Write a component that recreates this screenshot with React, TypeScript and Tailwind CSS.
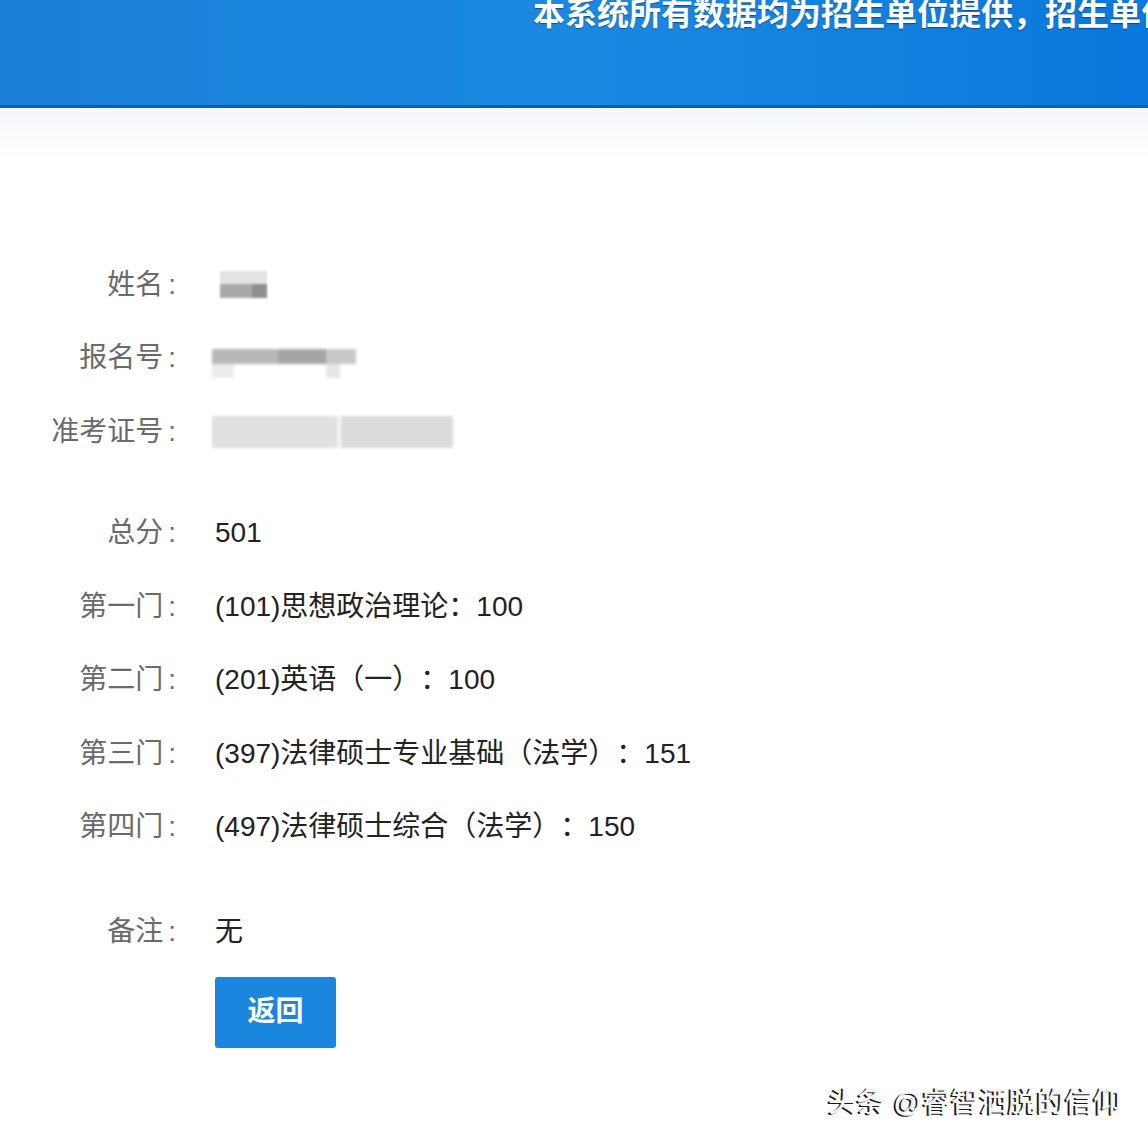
const cjk = 'font-["Liberation_Sans","Noto_Sans_CJK_SC",sans-serif]';

const identity = [
  { label: '姓名', blur: 'name' },
  { label: '报名号', blur: 'reg' },
  { label: '准考证号', blur: 'ticket' },
];

const scores = [
  { label: '总分', value: '501' },
  { label: '第一门', value: '(101)思想政治理论：100' },
  { label: '第二门', value: '(201)英语（一）：100' },
  { label: '第三门', value: '(397)法律硕士专业基础（法学）：151' },
  { label: '第四门', value: '(497)法律硕士综合（法学）：150' },
];

function Redacted({ kind }: { kind: string }) {
  if (kind === 'name') {
    return (
      <div className="ml-[5px] flex w-[47px] flex-col blur-[1px]">
        <div className="h-[13px] bg-[#e3e3e3]" />
        <div className="flex h-[14px]">
          <div className="w-[32px] bg-[#a9a9a9]" />
          <div className="flex-1 bg-[#8f8f8f]" />
        </div>
      </div>
    );
  }
  if (kind === 'reg') {
    return (
      <div className="-ml-[3px] mt-[10px] flex w-[144px] flex-col blur-[1.5px]">
        <div className="flex h-[15px]">
          <div className="w-[66px] bg-[#b8b8b8]" />
          <div className="w-[48px] bg-[#a5a5a5]" />
          <div className="flex-1 bg-[#c8c8c8]" />
        </div>
        <div className="flex h-[14px]">
          <div className="w-[22px] bg-[#ececec]" />
          <div className="w-[92px]" />
          <div className="w-[14px] bg-[#e6e6e6]" />
        </div>
      </div>
    );
  }
  return (
    <div className="-ml-[3px] flex h-[32px] w-[241px] blur-[1.5px]">
      <div className="w-[125px] bg-[#e0e0e0]" />
      <div className="w-[4px] bg-[#f4f4f4]" />
      <div className="flex-1 bg-[#dcdcdc]" />
    </div>
  );
}

function Row({ label, children }: { label: string; children: React.ReactNode }) {
  return (
    <div className="flex h-[73.5px] items-center">
      <div className="w-[178px] pr-[2px] text-right text-[28px] text-[#6a6a6a]">
        {label}
        <span className="ml-[5px]">:</span>
      </div>
      <div className="ml-[37px] text-[28px] text-[#222] [text-spacing-trim:space-all]">{children}</div>
    </div>
  );
}

export default function App() {
  return (
    <div className={`relative h-[1148px] w-[1148px] overflow-hidden bg-white ${cjk}`}>
      <header className="h-[108px] overflow-hidden border-b-[3px] border-[#0c5fae] bg-gradient-to-r from-[#1a7fd6] via-[#1a89e2] to-[#0a78dc]">
        <div className="-mt-[4px] h-[36px] pl-[533px] text-[32px] leading-[36px] font-bold whitespace-nowrap text-white [text-shadow:0_1px_1px_rgba(0,40,90,0.6)]">
          本系统所有数据均为招生单位提供，招生单位
        </div>
      </header>
      <div className="h-[52px] bg-gradient-to-b from-[#f4f7fb] to-white" />

      <main className="pt-[88px]">
        <div className="flex flex-col">
          {identity.map((r) => (
            <Row key={r.label} label={r.label}>
              <Redacted kind={r.blur} />
            </Row>
          ))}
        </div>

        <div className="mt-[28px] flex flex-col">
          {scores.map((r) => (
            <Row key={r.label} label={r.label}>
              {r.value}
            </Row>
          ))}
        </div>

        <div className="mt-[31px]">
          <Row label="备注">无</Row>
        </div>

        <div className="mt-[8px] pl-[215px]">
          <button
            type="button"
            className="flex h-[71px] w-[121px] items-center justify-center rounded-[3px] bg-[#1a86de] text-[28px] font-bold text-white"
          >
            返回
          </button>
        </div>
      </main>

      <div className="absolute right-[26px] bottom-[24px] text-[28px] font-medium tracking-[0.5px] whitespace-nowrap text-[#f5f5f5] [text-shadow:-2px_1px_0_#1a1a1a]">
        头条 @睿智洒脱的信仰
      </div>
    </div>
  );
}
